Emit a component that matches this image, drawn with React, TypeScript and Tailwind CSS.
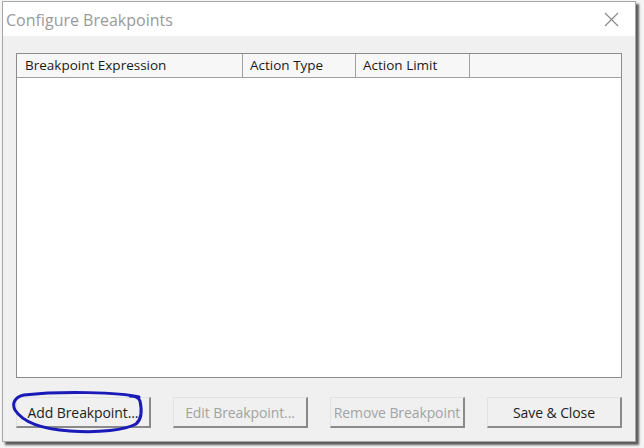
import React from 'react';

const font = { fontFamily: '"Open Sans", "Noto Sans", sans-serif' };

function Btn({ label, disabled }: { label: string; disabled?: boolean }) {
  return (
    <div
      className={`w-[135px] h-[31px] shrink-0 whitespace-nowrap flex items-center justify-center bg-[#f0f0f0] border-t border-l border-[#e2e2e2] border-b-2 border-r-2 border-b-[#8a8a8a] border-r-[#8a8a8a] text-[14px] tracking-[-0.1px] ${
        disabled ? 'text-[#a3a3a3]' : 'text-[#1e1e1e]'
      }`}
    >
      {label}
    </div>
  );
}

export default function App() {
  return (
    <div className="w-[644px] h-[448px] bg-[#f4f4f4] relative" style={font}>
      <div className="absolute left-[2px] top-[1px] w-[634px] h-[441px] border border-[#a6a6a6] bg-[#f0f0f0] shadow-[3px_3px_2px_rgba(40,40,40,0.75)] flex flex-col">
        {/* title bar */}
        <div className="h-[35px] bg-white flex items-center justify-between pl-[3px] pr-[16px]">
          <span className="text-[16px] text-[#9a9a9a] mt-[1px]">Configure Breakpoints</span>
          <svg width="15" height="15" viewBox="0 0 15 15" className="mt-[1px]">
            <path d="M1 1L14 14M14 1L1 14" stroke="#8a8a8a" strokeWidth="1.2" />
          </svg>
        </div>

        {/* body */}
        <div className="flex-1 px-[13px] pt-[17px] pb-[13px] flex flex-col">
          <div className="h-[325px] border border-[#8c8c8c] bg-white flex flex-col">
            <div className="h-[24px] flex border-b border-[#a0a0a0] bg-[#f7f7f7] text-[13.5px] text-[#1a1a1a]">
              <div className="w-[226px] border-r border-[#a0a0a0] pl-[8px] flex items-center">Breakpoint Expression</div>
              <div className="w-[113px] border-r border-[#a0a0a0] pl-[7px] flex items-center">Action Type</div>
              <div className="w-[114px] border-r border-[#a0a0a0] pl-[7px] flex items-center">Action Limit</div>
              <div className="flex-1" />
            </div>
            <div className="flex-1" />
          </div>

          <div className="mt-[19px] flex gap-[22px]">
            <Btn label="Add Breakpoint..." />
            <Btn label="Edit Breakpoint..." disabled />
            <Btn label="Remove Breakpoint" disabled />
            <Btn label="Save & Close" />
          </div>
        </div>
      </div>

      {/* hand-drawn blue annotation */}
      <svg className="absolute left-0 top-0 pointer-events-none" width="644" height="448">
        <path
          d="M139 397 C120 392 60 391 24 395 C14 397 12 404 15 410 C22 421 40 429 70 431 C100 433 125 430 136 424 C142 419 142 410 140 401 C139 398 136 396 130 396"
          fill="none"
          stroke="#1a1ab8"
          strokeWidth="3"
          strokeLinecap="round"
        />
      </svg>
    </div>
  );
}
